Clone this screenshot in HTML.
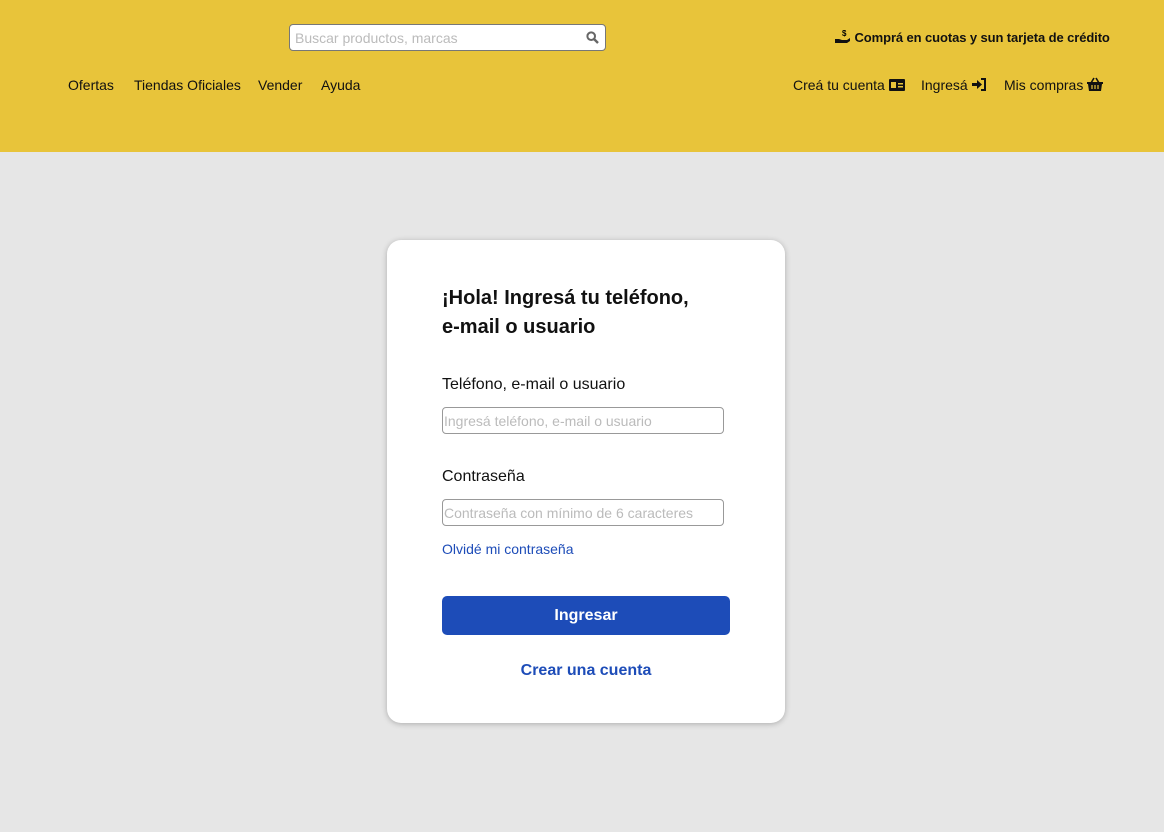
<!DOCTYPE html>
<html><head><meta charset="utf-8"><style>
*{box-sizing:border-box;margin:0;padding:0}
body{width:1164px;height:832px;background:#e6e6e6;font-family:"Liberation Sans",sans-serif;position:relative;overflow:hidden;color:#111}
.hdr{position:absolute;left:0;top:0;width:1164px;height:152px;background:#e8c43a}
.search{position:absolute;left:289px;top:24px;width:317px;height:27px;background:#fff;border:1px solid #777;border-radius:4px;font-size:14px;color:#bbb;padding:5px 0 0 5px}
.abs{position:absolute;font-size:14px;white-space:nowrap}
.card{position:absolute;left:387px;top:240px;width:398px;height:483px;background:#fff;border-radius:14px;box-shadow:0 1px 6px rgba(0,0,0,.25)}
.in{position:absolute;left:55px;width:282px;height:27px;border:1px solid #999;border-radius:4px;font-size:14px;color:#bbb;padding:5px 0 0 1px;white-space:nowrap}
</style></head><body>
<div class="hdr">
<div class="search">Buscar productos, marcas
<svg style="position:absolute;right:6px;top:6px" width="13" height="13" viewBox="0 0 13 13"><circle cx="5.2" cy="5.2" r="3.8" fill="none" stroke="#666" stroke-width="2"/><line x1="8" y1="8" x2="12" y2="12" stroke="#666" stroke-width="2.4"/></svg></div>
<div class="abs" style="left:835px;top:29px;font-weight:bold;font-size:13px;letter-spacing:-0.1px"><svg width="16" height="15" viewBox="0 0 16 15" style="vertical-align:-2px"><text x="7" y="7" font-size="8" font-weight="bold">$</text><path d="M0 10h4l3 1h5l3-2v3l-3 2H0z" fill="#111"/></svg> Comprá en cuotas y sun tarjeta de crédito</div>
<div class="abs" style="left:68px;top:77px">Ofertas</div>
<div class="abs" style="left:134px;top:77px">Tiendas Oficiales</div>
<div class="abs" style="left:258px;top:77px">Vender</div>
<div class="abs" style="left:321px;top:77px">Ayuda</div>
<div class="abs" style="left:793px;top:77px">Creá tu cuenta <svg width="16" height="12" viewBox="0 0 16 12" style="vertical-align:-1px"><rect width="16" height="12" rx="1" fill="#111"/><rect x="2" y="3" width="5" height="6" fill="#e8c43a"/><rect x="9" y="4" width="5" height="1.5" fill="#e8c43a"/><rect x="9" y="7" width="5" height="1.5" fill="#e8c43a"/></svg></div>
<div class="abs" style="left:921px;top:77px">Ingresá <svg width="15" height="13" viewBox="0 0 15 13" style="vertical-align:-1px"><path d="M0 5h5V2l5 4.5-5 4.5V8H0z" fill="#111"/><path d="M9 1h4v11H9" fill="none" stroke="#111" stroke-width="2"/></svg></div>
<div class="abs" style="left:1004px;top:77px">Mis compras <svg width="16" height="14" viewBox="0 0 16 14" style="vertical-align:-1px"><path d="M4 6L7 1M12 6L9 1" stroke="#111" stroke-width="1.6"/><path d="M0 5h16v2h-1l-1 7H2L1 7H0z" fill="#111"/><path d="M5 8v4M8 8v4M11 8v4" stroke="#e8c43a" stroke-width="1.2"/></svg></div>
</div>
<div class="card">
<div style="position:absolute;left:55px;top:44px;font-size:20px;font-weight:bold;line-height:29px">¡Hola! Ingresá tu teléfono,<br>e-mail o usuario</div>
<div style="position:absolute;left:55px;top:136px;font-size:16px">Teléfono, e-mail o usuario</div>
<div class="in" style="top:167px">Ingresá teléfono, e-mail o usuario</div>
<div style="position:absolute;left:55px;top:228px;font-size:16px">Contraseña</div>
<div class="in" style="top:259px">Contraseña con mínimo de 6 caracteres</div>
<div style="position:absolute;left:55px;top:301px;font-size:14px;color:#1d4cb8">Olvidé mi contraseña</div>
<div style="position:absolute;left:55px;top:356px;width:288px;height:39px;background:#1d4cb8;border-radius:5px;color:#fff;font-size:16px;font-weight:bold;text-align:center;line-height:39px">Ingresar</div>
<div style="position:absolute;left:55px;width:288px;top:422px;text-align:center;font-size:16px;font-weight:bold;color:#1d4cb8">Crear una cuenta</div>
</div>
</body></html>
